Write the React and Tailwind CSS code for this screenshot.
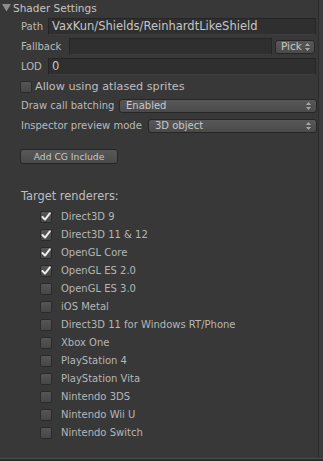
import React from 'react';

const renderers = [
  { name: 'Direct3D 9', on: true },
  { name: 'Direct3D 11 & 12', on: true },
  { name: 'OpenGL Core', on: true },
  { name: 'OpenGL ES 2.0', on: true },
  { name: 'OpenGL ES 3.0', on: false },
  { name: 'iOS Metal', on: false },
  { name: 'Direct3D 11 for Windows RT/Phone', on: false },
  { name: 'Xbox One', on: false },
  { name: 'PlayStation 4', on: false },
  { name: 'PlayStation Vita', on: false },
  { name: 'Nintendo 3DS', on: false },
  { name: 'Nintendo Wii U', on: false },
  { name: 'Nintendo Switch', on: false },
];

const Arrows = () => (
  <svg width="5" height="8" viewBox="0 0 5 8" className="shrink-0">
    <path d="M2.5 0 L5 3 L0 3 Z" fill="#a8a8a8" />
    <path d="M0 5 L5 5 L2.5 8 Z" fill="#a8a8a8" />
  </svg>
);

const Checkbox = ({ on }) => (
  <div className="w-[12px] h-[12px] shrink-0 rounded-[2px] border border-[#2a2a2a] bg-gradient-to-b from-[#555555] to-[#474747] flex items-center justify-center">
    {on && (
      <svg width="10" height="10" viewBox="0 0 10 10">
        <path d="M1.5 5 L4 7.6 L8.8 1.4" fill="none" stroke="#ececec" strokeWidth="2" strokeLinecap="round" strokeLinejoin="round" />
      </svg>
    )}
  </div>
);

const Field = ({ children }) => (
  <div className="flex-1 h-[17px] bg-[#2f2f2f] border border-[#252525] border-b-[#3d3d3d] flex items-center pl-[3px] text-[11.5px] leading-none text-[#c6c6c6]">
    {children}
  </div>
);

const Dropdown = ({ value }) => (
  <div className="flex-1 h-[14px] rounded-[3px] border border-[#262626] bg-gradient-to-b from-[#585858] to-[#4a4a4a] flex items-center justify-between pl-[6px] pr-[5px] text-[10px] leading-none text-[#c8c8c8]">
    <span>{value}</span>
    <Arrows />
  </div>
);

export default function App() {
  return (
    <div className="w-[323px] h-[461px] bg-[#383838] flex flex-col overflow-hidden select-none" style={{ fontFamily: '"DejaVu Sans", sans-serif' }}>
      <div className="flex flex-1">
        <div className="w-[318px] flex flex-col">
          {/* header */}
          <div className="h-[16px] flex items-center pl-[2px]">
            <svg width="9" height="8" viewBox="0 0 9 8" className="shrink-0">
              <path d="M0 0 L9 0 L4.5 7.5 Z" fill="#8c8c8c" />
            </svg>
            <span className="ml-[2px] text-[10.5px] leading-none text-[#c4c4c4]">Shader Settings</span>
          </div>

          <div className="mt-[2px] flex items-center pl-[21px] pr-[2px] text-[10px] leading-none text-[#bababa]">
            <span className="w-[27px] shrink-0">Path</span>
            <Field>VaxKun/Shields/ReinhardtLikeShield</Field>
          </div>

          <div className="mt-[3px] flex items-center pl-[21px] pr-[3px] text-[10px] leading-none text-[#bababa]">
            <span className="w-[48px] shrink-0">Fallback</span>
            <Field />
            <div className="ml-[3px] w-[40px] h-[14px] rounded-[3px] border border-[#262626] bg-gradient-to-b from-[#585858] to-[#4a4a4a] flex items-center justify-between pl-[5px] pr-[4px] text-[10.4px] text-[#c8c8c8]">
              <span>Pick</span>
              <Arrows />
            </div>
          </div>

          <div className="mt-[3px] flex items-center pl-[21px] pr-[2px] text-[10px] leading-none text-[#bababa]">
            <span className="w-[27px] shrink-0">LOD</span>
            <Field>0</Field>
          </div>

          <div className="mt-[5px] h-[14px] flex items-center pl-[20px]">
            <Checkbox on={false} />
            <span className="ml-[3px] text-[11.2px] leading-none text-[#bebebe]">Allow using atlased sprites</span>
          </div>

          <div className="mt-[5px] flex items-center pl-[21px] pr-[1px] text-[10px] leading-none text-[#bababa]">
            <span className="w-[98px] shrink-0">Draw call batching</span>
            <Dropdown value="Enabled" />
          </div>

          <div className="mt-[6px] flex items-center pl-[21px] pr-[1px] text-[10px] leading-none text-[#bababa]">
            <span className="w-[127px] shrink-0">Inspector preview mode</span>
            <Dropdown value="3D object" />
          </div>

          <div className="mt-[16px] ml-[20px] w-[98px] h-[15px] rounded-[3px] border border-[#262626] bg-gradient-to-b from-[#585858] to-[#4a4a4a] flex items-center justify-center text-[9.2px] leading-none text-[#c8c8c8]">
            Add CG Include
          </div>

          <div className="mt-[26px] h-[14px] flex items-center pl-[21px] text-[11.4px] leading-none text-[#bdbdbd]">
            Target renderers:
          </div>

          <div className="mt-[4px] flex flex-col">
            {renderers.map((r) => (
              <div key={r.name} className="h-[18px] flex items-center pl-[40px]">
                <Checkbox on={r.on} />
                <span className="ml-[9px] text-[10px] leading-none text-[#b6b6b6]">{r.name}</span>
              </div>
            ))}
          </div>
        </div>
        <div className="flex-1 border-l border-[#2c2c2c] bg-[#333333] bg-[radial-gradient(#474747_0.6px,transparent_0.8px)] bg-[length:2px_2px]" />
      </div>
      <div className="h-[1px] bg-[#4c4c4c]" />
      <div className="h-[2px] bg-[#2b2b2b]" />
    </div>
  );
}
